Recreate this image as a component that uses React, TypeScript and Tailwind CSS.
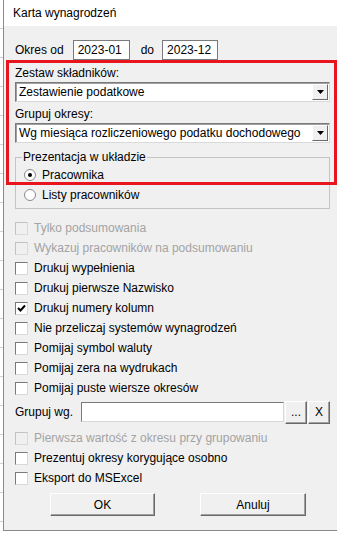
import React from "react";

function CheckBox({
  label,
  checked,
  disabled,
}: {
  label: string;
  checked?: boolean;
  disabled?: boolean;
}) {
  return (
    <div className="flex h-[20px] items-center">
      <div
        className={`flex h-[13px] w-[13px] items-center justify-center border border-t-[#7a7a7a] border-l-[#7a7a7a] border-r-[#d9d9d9] border-b-[#d9d9d9] ${
          disabled ? "bg-[#f0f0f0] border-t-[#c2c2c2] border-l-[#c2c2c2]" : "bg-white"
        }`}
      >
        {checked && (
          <svg width="9" height="9" viewBox="0 0 9 9">
            <path d="M1 4 L3.5 6.5 L8 1.5" fill="none" stroke="#000" strokeWidth="2" />
          </svg>
        )}
      </div>
      <span className={`ml-[6px] ${disabled ? "text-[#a3a3a3]" : "text-black"}`}>{label}</span>
    </div>
  );
}

function Radio({ label, checked }: { label: string; checked?: boolean }) {
  return (
    <div className="flex h-[20px] items-center">
      <div className="flex h-[12px] w-[12px] items-center justify-center rounded-full border border-[#8a8a8a] bg-white">
        {checked && <div className="h-[4px] w-[4px] rounded-full bg-black" />}
      </div>
      <span className="ml-[6px]">{label}</span>
    </div>
  );
}

function Combo({ value }: { value: string }) {
  return (
    <div className="flex h-[20px] w-[315px] items-center border border-t-[#7a7a7a] border-l-[#7a7a7a] border-r-[#d9d9d9] border-b-[#d9d9d9] bg-white shadow-[inset_1px_1px_0_#a0a0a0]">
      <span className="ml-[3px] flex-1 truncate">{value}</span>
      <div className="mr-[1px] flex h-[16px] w-[16px] items-center justify-center border border-t-white border-l-white border-r-[#696969] border-b-[#696969] bg-[#f0f0f0]">
        <svg width="7" height="4" viewBox="0 0 7 4">
          <path d="M0 0 H7 L3.5 4 Z" fill="#000" />
        </svg>
      </div>
    </div>
  );
}

function Button({ label, className = "" }: { label: string; className?: string }) {
  return (
    <div
      className={`flex h-[23px] items-center justify-center border border-t-white border-l-white border-r-[#696969] border-b-[#696969] bg-[#f0f0f0] shadow-[inset_-1px_-1px_0_#a0a0a0] ${className}`}
    >
      {label}
    </div>
  );
}

export default function App() {
  return (
    <div className="relative flex h-[538px] w-[362px] bg-white font-['Liberation_Sans',sans-serif] text-[12px] text-black">
      <div className="h-[531px] w-[3px] bg-[repeating-linear-gradient(to_bottom,#ffffff_0px,#ffffff_28px,#d0d0d0_28px,#d0d0d0_29px)]" />
      <div className="flex h-[531px] w-[334px] flex-col border-l border-b border-[#8a8a8a]">
        <div className="flex h-[26px] items-center bg-white pl-[9px] text-[12px]">Karta wynagrodzeń</div>
        <div className="flex flex-1 flex-col bg-[#f0f0f0] pl-[11px]">
          <div className="mt-[14px] flex h-[20px] items-center">
            <span>Okres od</span>
            <div className="ml-[9px] flex h-[20px] w-[57px] items-center border border-[#7a7a7a] bg-white pl-[4px]">2023-01</div>
            <span className="ml-[11px]">do</span>
            <div className="ml-[8px] flex h-[20px] w-[56px] items-center border border-[#7a7a7a] bg-white pl-[4px]">2023-12</div>
          </div>

          <div className="mt-[5px] h-[16px] leading-[16px]">Zestaw składników:</div>
          <div className="mt-[1px]">
            <Combo value="Zestawienie podatkowe" />
          </div>
          <div className="mt-[4px] h-[16px] leading-[16px]">Grupuj okresy:</div>
          <div className="mt-[1px]">
            <Combo value="Wg miesiąca rozliczeniowego podatku dochodowego" />
          </div>

          <fieldset className="mt-[6px] w-[315px] border border-[#c4c4c4] pb-[3px] pl-[8px]">
            <legend className="ml-[-2px] h-[16px] px-[1px] leading-[16px]">Prezentacja w układzie</legend>
            <Radio label="Pracownika" checked />
            <Radio label="Listy pracowników" />
          </fieldset>

          <div className="mt-[9px] flex flex-col">
            <CheckBox label="Tylko podsumowania" disabled />
            <CheckBox label="Wykazuj pracowników na podsumowaniu" disabled />
            <CheckBox label="Drukuj wypełnienia" />
            <CheckBox label="Drukuj pierwsze Nazwisko" />
            <CheckBox label="Drukuj numery kolumn" checked />
            <CheckBox label="Nie przeliczaj systemów wynagrodzeń" />
            <CheckBox label="Pomijaj symbol waluty" />
            <CheckBox label="Pomijaj zera na wydrukach" />
            <CheckBox label="Pomijaj puste wiersze okresów" />
          </div>

          <div className="mt-[4px] flex h-[20px] items-center">
            <span className="w-[66px]">Grupuj wg.</span>
            <div className="h-[20px] w-[203px] border border-t-[#7a7a7a] border-l-[#7a7a7a] border-r-[#d9d9d9] border-b-[#d9d9d9] bg-white" />
            <Button label="..." className="ml-[1px] h-[20px] w-[22px]" />
            <Button label="X" className="ml-[1px] h-[20px] w-[22px]" />
          </div>

          <div className="mt-[6px] flex flex-col">
            <CheckBox label="Pierwsza wartość z okresu przy grupowaniu" disabled />
            <CheckBox label="Prezentuj okresy korygujące osobno" />
            <CheckBox label="Eksport do MSExcel" />
          </div>

          <div className="mt-[5px] flex">
            <Button label="OK" className="ml-[35px] w-[105px]" />
            <Button label="Anuluj" className="ml-[45px] w-[106px]" />
          </div>
        </div>
      </div>

      <div className="pointer-events-none absolute left-[6px] top-[60px] h-[125px] w-[331px] border-[3px] border-[#e8141e]" />
    </div>
  );
}
